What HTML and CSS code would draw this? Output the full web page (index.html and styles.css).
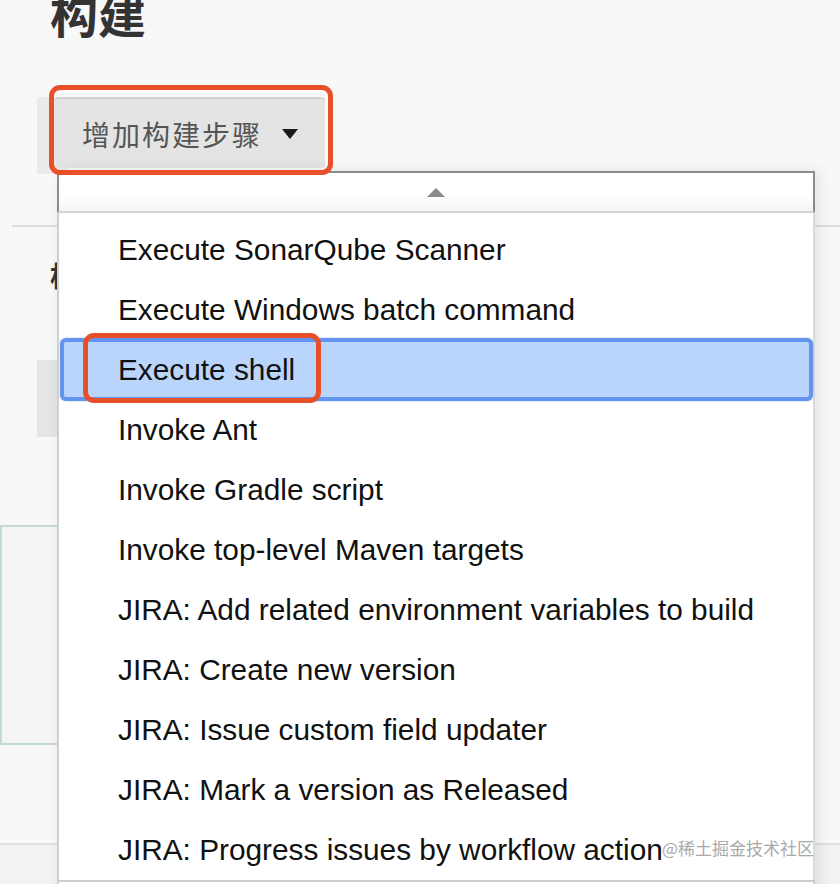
FILE: index.html
```html
<!DOCTYPE html>
<html lang="zh">
<head>
<meta charset="utf-8">
<title>构建</title>
<link rel="stylesheet" href="styles.css">
</head>
<body>
<main class="page">
  <h1 class="title">构建</h1>
  <div class="btn-wrap">
    <button class="add-btn"><span class="add-label">增加构建步骤</span><span class="caret"></span></button>
  </div>
  <hr class="sep">
  <h2 class="sub">构建后操作</h2>
  <div class="post-btn"></div>
  <div class="panel"></div>
  <div class="foot"></div>
</main>

<span class="mark mark-btn"></span>

<div class="menu">
  <div class="menu-up"><span class="tri-up"></span></div>
  <ul class="menu-list">
    <li class="item">Execute SonarQube Scanner</li>
    <li class="item">Execute Windows batch command</li>
    <li class="item item-active">Execute shell<span class="mark mark-item"></span></li>
    <li class="item">Invoke Ant</li>
    <li class="item">Invoke Gradle script</li>
    <li class="item">Invoke top-level Maven targets</li>
    <li class="item">JIRA: Add related environment variables to build</li>
    <li class="item">JIRA: Create new version</li>
    <li class="item">JIRA: Issue custom field updater</li>
    <li class="item">JIRA: Mark a version as Released</li>
    <li class="item">JIRA: Progress issues by workflow action</li>
  </ul>
  <div class="menu-down"></div>
</div>

<div class="watermark">@稀土掘金技术社区</div>
</body>
</html>
```

FILE: styles.css
```css
html, body {
  margin: 0;
  padding: 0;
}
body {
  background: #f8f8f8;
  width: 840px;
  height: 884px;
  overflow: hidden;
  position: relative;
  font-family: "Liberation Sans", Arial, "Noto Sans CJK SC", sans-serif;
}
.page {
  display: flex;
  flex-direction: column;
  align-items: flex-start;
}
.title {
  margin: -12px 0 0 50px;
  font-family: "Noto Sans CJK SC", sans-serif;
  font-size: 48px;
  line-height: 48px;
  font-weight: 700;
  color: #333;
}
.btn-wrap {
  margin: 61px 0 0 37px;
  padding: 0 0 6px 18px;
  background: linear-gradient(90deg, #eaeaea 0, #eaeaea 30px, #f8f8f8 30px);
  display: flex;
}
.add-btn {
  width: 270px;
  height: 71px;
  border: none;
  border-top: 2px solid #d2d2d2;
  border-radius: 4px;
  background: #e4e4e4;
  display: flex;
  align-items: center;
  padding: 0 0 0 27px;
  font-family: "Noto Sans CJK SC", sans-serif;
  font-size: 28px;
  color: #555;
  letter-spacing: 2px;
}
.caret {
  margin-left: 20px;
  width: 0;
  height: 0;
  border-left: 8.5px solid transparent;
  border-right: 8.5px solid transparent;
  border-top: 10px solid #1a1a1a;
}
.sep {
  margin: 51px 0 0 12px;
  width: 828px;
  border: none;
  border-top: 2px solid #dcdcdc;
}
.sub {
  margin: 34px 0 0 50px;
  font-family: "Noto Sans CJK SC", sans-serif;
  font-size: 28px;
  line-height: 28px;
  font-weight: 700;
  color: #333;
}
.post-btn {
  margin: 71px 0 0 37px;
  width: 320px;
  height: 77px;
  background: #e5e5e5;
}
.panel {
  margin: 88px 0 0 0;
  width: 800px;
  height: 216px;
  border: 2px solid #c4dbd1;
  background: #f3f4f3;
}
.foot {
  margin-top: 98px;
  width: 840px;
  height: 60px;
  border-top: 2px solid #e0e0e0;
  background: #f2f2f2;
}

.mark {
  position: absolute;
  box-sizing: border-box;
  border: 5px solid #e9502a;
  border-radius: 11px;
  pointer-events: none;
  z-index: 5;
}
.mark-btn {
  left: 49px;
  top: 85px;
  width: 284px;
  height: 90px;
}

.menu {
  position: absolute;
  left: 57px;
  top: 171px;
  width: 758px;
  box-shadow: 4px 0 14px rgba(0, 0, 0, 0.09);
  z-index: 3;
}
.menu-up {
  box-sizing: border-box;
  height: 42px;
  border: 2px solid #8c8c8c;
  border-bottom: 2px solid #d4d4d4;
  background: linear-gradient(#ffffff 55%, #f5f5f5);
  display: flex;
  justify-content: center;
  padding-top: 15px;
}
.tri-up {
  width: 0;
  height: 0;
  border-left: 9px solid transparent;
  border-right: 9px solid transparent;
  border-bottom: 9px solid #8a8a8a;
}
.menu-list {
  list-style: none;
  margin: 0;
  padding: 7px 0 0 0;
  background: #fff;
  border-left: 2px solid #d0d0d0;
  border-right: 2px solid #dadada;
}
.item {
  position: relative;
  height: 60px;
  line-height: 60px;
  padding-left: 59px;
  font-size: 29.8px;
  color: #111;
  white-space: nowrap;
}
.item-active {
  margin: -2px 0 -1px 1px;
  height: 63px;
  line-height: 63px;
  padding-left: 58px;
  background: #b9d5fb;
  border-radius: 6px;
  box-shadow: inset 0 0 0 4px #6394ef, 0 0 2px rgba(99, 148, 239, 0.6);
}
.mark-item {
  left: 23px;
  top: -5px;
  width: 238px;
  height: 70px;
}
.menu-down {
  height: 40px;
  background: #fff;
  border: 2px solid #d0d0d0;
  border-top: 2px solid #cdcdcd;
}

.watermark {
  position: absolute;
  left: 662px;
  top: 836px;
  font-family: "Noto Sans CJK SC", sans-serif;
  font-size: 17px;
  line-height: 24px;
  color: #a9a9a9;
  z-index: 6;
}
```
